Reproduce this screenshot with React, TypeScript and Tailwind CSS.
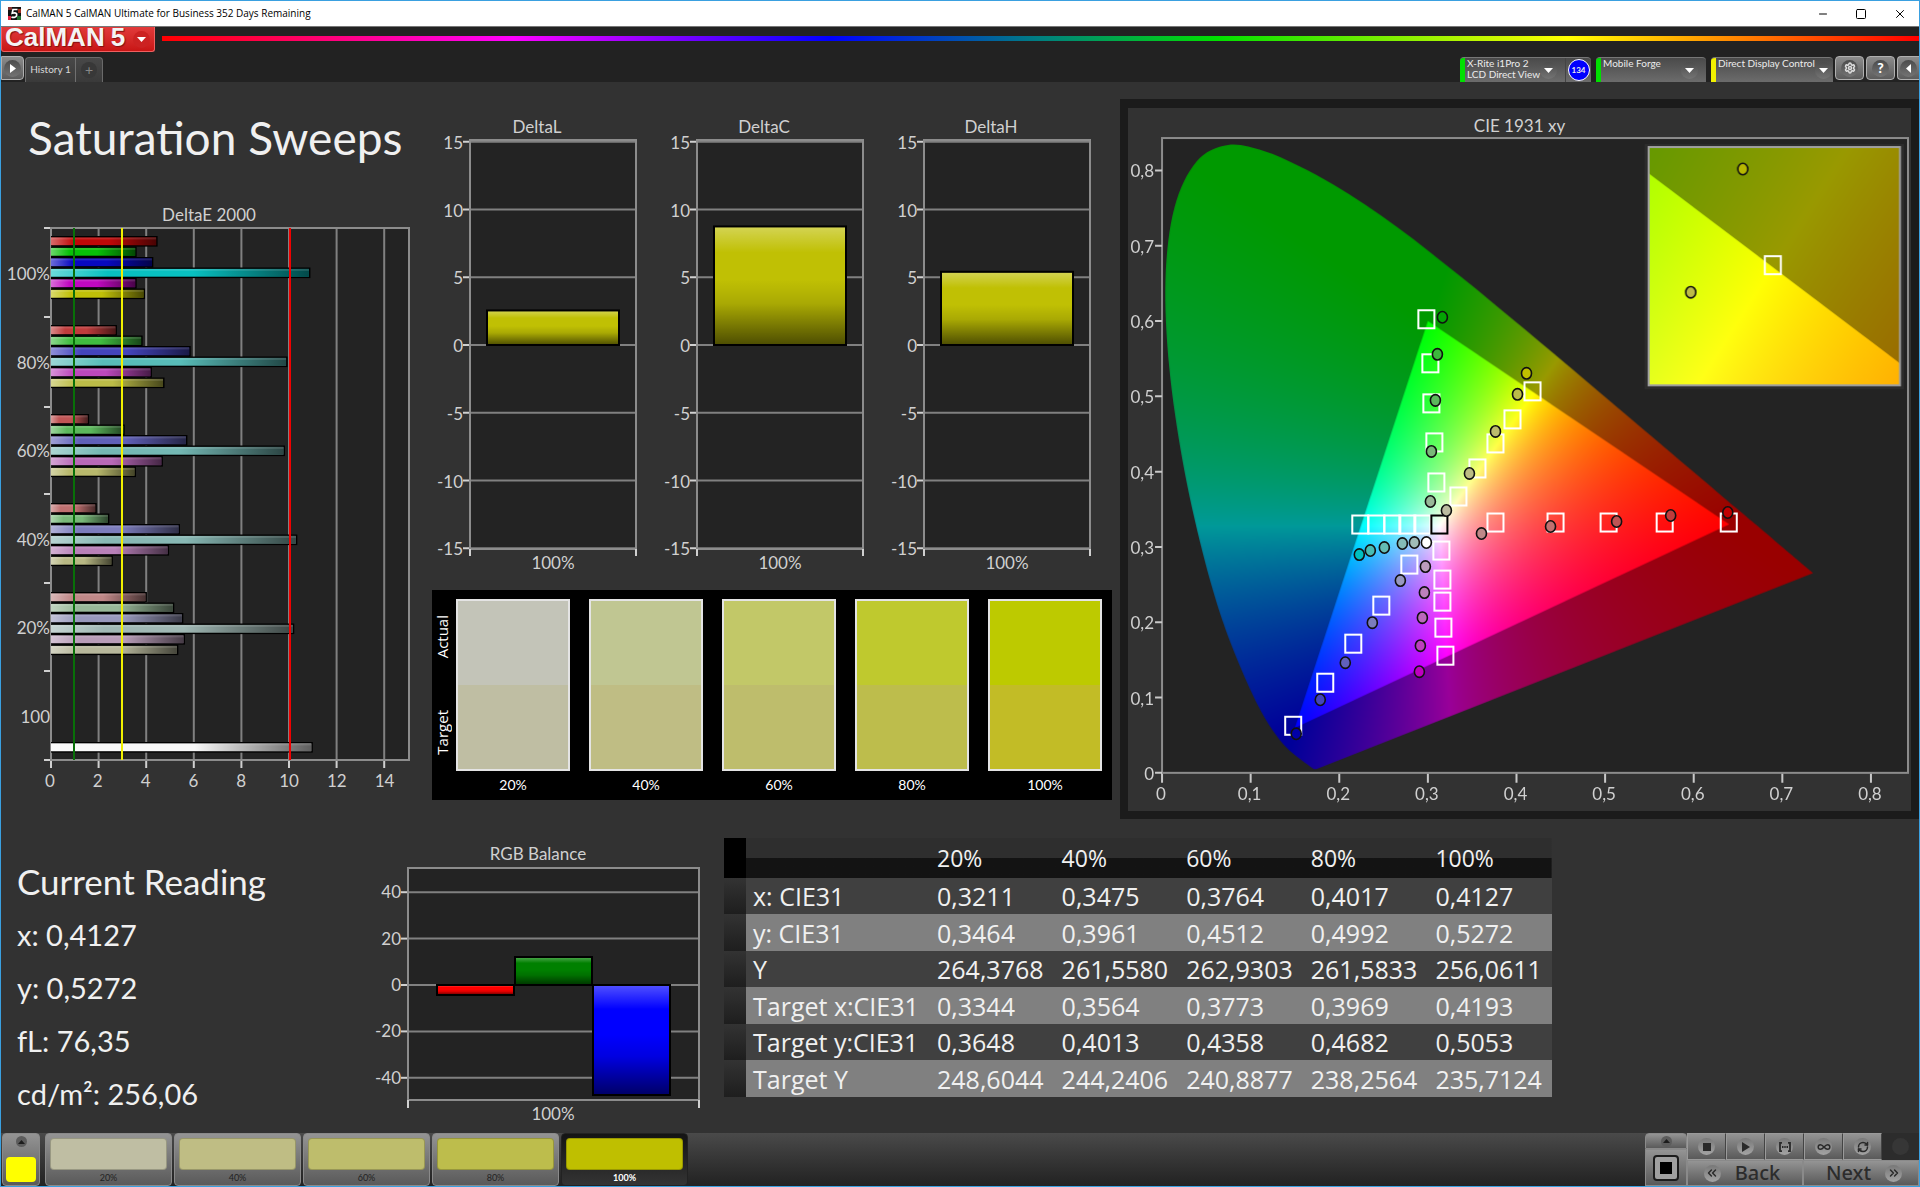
import { useEffect, useRef } from 'react';
import type { ReactNode } from 'react';
import { Settings, Minus, Square, X, ChevronsLeft, ChevronsRight, Infinity as InfinityIcon, RefreshCw } from 'lucide-react';

const LATO = 'Lato, "Open Sans", sans-serif';

/* ---------- CIE diagram helpers ---------- */

// Spectral locus, 2 degree observer
const LOCUS: [number, number][] = [
  [0.1741, 0.005], [0.1714, 0.0051], [0.1689, 0.0069], [0.1644, 0.0109], [0.1566, 0.0177],
  [0.144, 0.0297], [0.1355, 0.0399], [0.1241, 0.0578], [0.1096, 0.0868], [0.0913, 0.1327],
  [0.0687, 0.2007], [0.0454, 0.295], [0.0235, 0.4127], [0.0082, 0.5384], [0.0039, 0.6548],
  [0.0139, 0.7502], [0.0389, 0.812], [0.0743, 0.8338],
  [0.1142, 0.8262], [0.1547, 0.8059], [0.1929, 0.7816], [0.2296, 0.7543],
  [0.2658, 0.7243], [0.3016, 0.6923], [0.3373, 0.6589], [0.3731, 0.6245], [0.4087, 0.5896],
  [0.4441, 0.5547], [0.4788, 0.5202], [0.5125, 0.4866], [0.5448, 0.4544], [0.5752, 0.4242],
  [0.6029, 0.3965], [0.627, 0.3725], [0.6482, 0.3514], [0.6658, 0.334], [0.6915, 0.3083],
  [0.7079, 0.292], [0.719, 0.2809], [0.73, 0.27], [0.7347, 0.2653],
];

const GAMUT: [number, number][] = [[0.64, 0.33], [0.3, 0.6], [0.15, 0.06]];

type FieldProps = {
  width: number;
  height: number;
  x0: number;
  y0: number;
  sx: number;
  sy: number;
};

// x0 / y0 is the chromaticity of the lower left corner, sx / sy are pixels per unit
function ChromaField({ width, height, x0, y0, sx, sy }: FieldProps) {
  const ref = useRef<HTMLCanvasElement>(null);

  useEffect(() => {
    const ctx = ref.current?.getContext('2d');
    if (!ctx) return;
    const img = ctx.createImageData(width, height);
    for (let j = 0; j < height; j++) {
      const y = Math.max(0.001, y0 + (height - j) / sy);
      for (let i = 0; i < width; i++) {
        const x = x0 + i / sx;
        const X = x / y;
        const Z = (1 - x - y) / y;
        const r = Math.max(0, 3.2406 * X - 1.5372 - 0.4986 * Z);
        const g = Math.max(0, -0.9689 * X + 1.8758 + 0.0415 * Z);
        const b = Math.max(0, 0.0557 * X - 0.204 + 1.057 * Z);
        const m = Math.max(r, g, b) || 1;
        const k = (j * width + i) * 4;
        img.data[k] = (r / m) * 255;
        img.data[k + 1] = (g / m) * 255;
        img.data[k + 2] = (b / m) * 255;
        img.data[k + 3] = 255;
      }
    }
    ctx.putImageData(img, 0, 0);

    const toPx = ([x, y]: [number, number]) => [(x - x0) * sx, height - (y - y0) * sy];

    // darken everything outside the gamut
    ctx.beginPath();
    ctx.rect(0, 0, width, height);
    GAMUT.map(toPx).forEach(([px, py], n) => (n === 0 ? ctx.moveTo(px, py) : ctx.lineTo(px, py)));
    ctx.closePath();
    ctx.fillStyle = 'rgba(0,0,0,0.4)';
    ctx.fill('evenodd');

    // cut to the locus, smoothed between the samples
    const p = LOCUS.map(toPx);
    const at = (n: number) => p[Math.min(p.length - 1, Math.max(0, n))];
    ctx.globalCompositeOperation = 'destination-in';
    ctx.beginPath();
    ctx.moveTo(p[0][0], p[0][1]);
    for (let n = 0; n < p.length - 1; n++) {
      const [a, b, c, d] = [at(n - 1), at(n), at(n + 1), at(n + 2)];
      ctx.bezierCurveTo(
        b[0] + (c[0] - a[0]) / 6, b[1] + (c[1] - a[1]) / 6,
        c[0] - (d[0] - b[0]) / 6, c[1] - (d[1] - b[1]) / 6,
        c[0], c[1],
      );
    }
    ctx.closePath();
    ctx.fillStyle = '#000';
    ctx.fill();
    ctx.globalCompositeOperation = 'source-over';
  }, [width, height, x0, y0, sx, sy]);

  return <canvas ref={ref} width={width} height={height} className="block w-full h-full" />;
}

const targets: [number, number][] = [
  [1426, 319], [1430, 363], [1431, 403], [1434, 442], [1436, 482],
  [1532, 391], [1512, 419], [1495, 443], [1477, 468], [1458, 496],
  [1495, 522], [1555, 522], [1608, 522], [1664, 522], [1728, 522],
  [1360, 524], [1376, 524], [1392, 524], [1407, 524], [1422, 524],
  [1441, 550], [1442, 579], [1442, 601], [1443, 627], [1445, 655],
  [1409, 564], [1381, 605], [1353, 643], [1325, 682], [1293, 725],
];

const readings: [number, number, string][] = [
  [1442, 317, '#04a404'], [1437, 354, '#3cb83c'], [1435, 400, '#5cb85c'], [1431, 451, '#78b878'], [1430, 501, '#98b898'],
  [1526, 373, '#c0c000'], [1517, 394, '#bcbc48'], [1495, 431, '#bcbc6c'], [1469, 473, '#bcbc84'], [1446, 510, '#bcbca0'],
  [1727, 512, '#c00000'], [1670, 515, '#c03c3c'], [1616, 521, '#c05454'], [1550, 526, '#c07070'], [1481, 533, '#c08888'],
  [1359, 554, '#00c0c0'], [1370, 550, '#48bcb4'], [1384, 547, '#64bcb4'], [1402, 543, '#84bcb8'], [1414, 542, '#a0bcb8'],
  [1296, 733, '#0000a8'], [1320, 699, '#4444bc'], [1345, 662, '#6060bc'], [1372, 622, '#7c7cbc'], [1400, 580, '#9898c0'],
  [1425, 566, '#bc9cbc'], [1424, 592, '#bc80bc'], [1422, 617, '#bc68bc'], [1420, 645, '#bc40bc'], [1419, 671, '#c000c0'],
  [1426, 542, '#ffffff'],
];

function CieChart() {
  const steps = [0, 1, 2, 3, 4, 5, 6, 7, 8];
  return (
    <svg viewBox="1128 108 782 702" className="block w-full h-auto" fontFamily={LATO} fontSize={17} fill="#d0d0d0">
      <text x={1519} y={132} textAnchor="middle">CIE 1931 xy</text>
      <rect x={1162} y={138} width={745} height={634} fill="#232323" />
      <foreignObject x={1162} y={138} width={745} height={634}>
        <ChromaField width={745} height={634} x0={0} y0={0} sx={885} sy={752} />
      </foreignObject>
      <rect x={1162} y={138} width={745} height={634} fill="none" stroke="#8c8c8c" strokeWidth={2} />
      {steps.map((n) => (
        <g key={n}>
          <path d={`M1155 ${772 - n * 75.2}h7M${1162 + n * 88.5} 773v9`} stroke="#c8c8c8" strokeWidth={2} />
          <text x={1154} y={779 - n * 75.2} textAnchor="end">{n ? `0,${n}` : '0'}</text>
          <text x={1161 + n * 88.5} y={799} textAnchor="middle">{n ? `0,${n}` : '0'}</text>
        </g>
      ))}
      {targets.map(([x, y]) => (
        <rect key={`${x}-${y}`} x={x - 8} y={y - 9} width={16} height={18} fill="none" stroke="#fff" strokeWidth={2} />
      ))}
      <rect x={1431} y={515} width={16} height={18} fill="none" stroke="#000" strokeWidth={2} />
      {readings.map(([x, y, c]) => (
        <ellipse key={`${x}-${y}`} cx={x} cy={y} rx={5} ry={5.7} fill={c} stroke="#111" strokeWidth={1.6} />
      ))}

      {/* zoomed view round the current target */}
      <rect x={1644} y={144} width={259} height={245} fill="#2c2c2c" />
      <foreignObject x={1648} y={147} width={251} height={238}>
        <ChromaField width={251} height={238} x0={0.3925} y0={0.4782} sx={4600} sy={4380} />
      </foreignObject>
      <rect x={1648} y={147} width={251} height={238} fill="none" stroke="#a0a0a0" strokeWidth={2} />
      <rect x={1764} y={256} width={16} height={18} fill="none" stroke="#fff" strokeWidth={2} />
      <ellipse cx={1742} cy={169} rx={5} ry={5.7} fill="#b8b800" stroke="#111" strokeWidth={1.6} />
      <ellipse cx={1690} cy={292} rx={5} ry={5.7} fill="#bcbc48" stroke="#111" strokeWidth={1.6} />
    </svg>
  );
}

/* ---------- bar charts ---------- */

const sweeps = [
  { label: '100%', values: [4.48, 3.6, 4.3, 10.9, 3.6, 3.95], colors: ['#c00808', '#08c008', '#0808c0', '#08c0c0', '#c008c0', '#c0c008'] },
  { label: '80%', values: [2.77, 3.85, 5.87, 9.94, 4.24, 4.77], colors: ['#c03c3c', '#40bc40', '#4444bc', '#58bcb8', '#bc48bc', '#bcbc48'] },
  { label: '60%', values: [1.6, 3.1, 5.73, 9.83, 4.7, 3.57], colors: ['#c05555', '#5cb85c', '#6060b8', '#74b8b4', '#b868b8', '#b8b86c'] },
  { label: '40%', values: [1.92, 2.45, 5.42, 10.35, 4.96, 2.6], colors: ['#c07070', '#78b878', '#7c7cbc', '#88b8b4', '#b880b8', '#b8b884'] },
  { label: '20%', values: [4.03, 5.18, 5.56, 10.22, 5.63, 5.35], colors: ['#c08888', '#98b898', '#9898bc', '#a0b8b4', '#b89cb8', '#b8b89c'] },
];

function Sheen() {
  return (
    <defs>
      <linearGradient id="sheenX">
        <stop offset="0" stopColor="#fff" stopOpacity=".4" />
        <stop offset=".22" stopColor="#fff" stopOpacity="0" />
        <stop offset=".55" stopColor="#000" stopOpacity="0" />
        <stop offset="1" stopColor="#000" stopOpacity=".62" />
      </linearGradient>
      <linearGradient id="sheenY" x2="0" y2="1">
        <stop offset="0" stopColor="#fff" stopOpacity=".32" />
        <stop offset=".22" stopColor="#fff" stopOpacity="0" />
        <stop offset=".45" stopColor="#000" stopOpacity="0" />
        <stop offset=".65" stopColor="#000" stopOpacity=".12" />
        <stop offset="1" stopColor="#000" stopOpacity=".6" />
      </linearGradient>
    </defs>
  );
}

function HBar({ y, value, color }: { y: number; value: number; color: string }) {
  const w = value * 23.8;
  return (
    <g>
      <rect x={51} y={y} width={w} height={10.6} fill="#000" />
      <rect x={51} y={y + 1.4} width={w - 1.5} height={7.8} fill={color} />
      <rect x={51} y={y + 1.4} width={w - 1.5} height={7.8} fill="url(#sheenX)" />
      <rect x={51} y={y + 1.4} width={w - 1.5} height={2} fill="#fff" opacity={0.12} />
    </g>
  );
}

function DeltaEChart() {
  return (
    <svg viewBox="1 200 431 600" className="block w-full h-auto" fontFamily={LATO} fontSize={17} fill="#d0d0d0">
      <Sheen />
      <text x={209} y={221} textAnchor="middle">DeltaE 2000</text>
      <rect x={51} y={228} width={358} height={532} fill="#232323" />
      {[0, 2, 4, 6, 8, 10, 12, 14].map((n) => (
        <g key={n}>
          <path d={`M${51 + n * 23.8} 228v532`} stroke="#808080" strokeWidth={2} />
          <path d={`M${51 + n * 23.8} 760v8`} stroke="#d0d0d0" strokeWidth={2} />
          <text x={50 + n * 23.9} y={787} textAnchor="middle">{n}</text>
        </g>
      ))}
      {[228, 317, 407, 494, 583, 671, 760].map((y) => (
        <path key={y} d={`M44 ${y}h7`} stroke="#d0d0d0" strokeWidth={2} />
      ))}
      <rect x={51} y={228} width={358} height={532} fill="none" stroke="#8c8c8c" strokeWidth={2} />
      {sweeps.map((s, i) => (
        <g key={s.label}>
          <text x={50} y={280 + i * 88.5} textAnchor="end">{s.label}</text>
          {s.values.map((v, k) => (
            <HBar key={k} y={236 + i * 89 + k * 10.5} value={v} color={s.colors[k]} />
          ))}
        </g>
      ))}
      <text x={50} y={723} textAnchor="end">100</text>
      <HBar y={742} value={11} color="#f8f8f8" />
      <path d="M74 228v532" stroke="#087008" strokeWidth={2} />
      <path d="M122 228v532" stroke="#f0f000" strokeWidth={2} />
      <path d="M290 228v532" stroke="#f00000" strokeWidth={2} />
    </svg>
  );
}

function VBar({ x, y, w, h, color }: { x: number; y: number; w: number; h: number; color: string }) {
  return (
    <g>
      <rect x={x} y={y} width={w} height={h} fill={color} />
      <rect x={x} y={y} width={w} height={h} fill="url(#sheenY)" stroke="#000" strokeWidth={2} />
    </g>
  );
}

const deltas = [
  { title: 'DeltaL', value: 2.55 },
  { title: 'DeltaC', value: 8.75 },
  { title: 'DeltaH', value: 5.4 },
];

function DeltaCharts() {
  return (
    <svg viewBox="432 110 688 470" className="block w-full h-auto" fontFamily={LATO} fontSize={17} fill="#d0d0d0">
      {deltas.map((d, i) => (
        <g key={d.title} transform={`translate(${i * 227} 0)`}>
          <text x={537} y={133} textAnchor="middle">{d.title}</text>
          <rect x={470} y={140} width={166} height={409} fill="#232323" />
          {[15, 10, 5, 0, -5, -10, -15].map((n) => (
            <g key={n}>
              <path d={`M470 ${345 - n * 13.55}h166`} stroke="#808080" strokeWidth={2} />
              <path d={`M463 ${345 - n * 13.55}h7`} stroke="#d0d0d0" strokeWidth={2} />
              <text x={463} y={352 - n * 13.55} textAnchor="end">{n}</text>
            </g>
          ))}
          <rect x={470} y={140} width={166} height={409} fill="none" stroke="#8c8c8c" strokeWidth={2} />
          <path d="M470 549v7M636 549v7" stroke="#d0d0d0" strokeWidth={2} />
          <VBar x={487} y={345 - d.value * 13.55} w={132} h={d.value * 13.55} color="#c0c004" />
          <text x={553} y={569} textAnchor="middle">100%</text>
        </g>
      ))}
    </svg>
  );
}

function RgbBalance() {
  return (
    <svg viewBox="370 838 350 290" className="block w-full h-auto" fontFamily={LATO} fontSize={17} fill="#d0d0d0">
      <text x={538} y={860} textAnchor="middle">RGB Balance</text>
      <rect x={408} y={868} width={291} height={232} fill="#232323" />
      {[40, 20, 0, -20, -40].map((n) => (
        <g key={n}>
          <path d={`M408 ${985 - n * 2.32}h291`} stroke="#808080" strokeWidth={2} />
          <path d={`M401 ${985 - n * 2.32}h7`} stroke="#d0d0d0" strokeWidth={2} />
          <text x={401} y={991 - n * 2.32} textAnchor="end">{n}</text>
        </g>
      ))}
      <rect x={408} y={868} width={291} height={232} fill="none" stroke="#8c8c8c" strokeWidth={2} />
      <path d="M408 1100v8M699 1100v8" stroke="#d0d0d0" strokeWidth={2} />
      <VBar x={437} y={985} w={77} h={10} color="#ff0000" />
      <VBar x={515} y={957} w={77} h={28} color="#008000" />
      <VBar x={593} y={985} w={77} h={110} color="#0000ff" />
      <text x={553} y={1120} textAnchor="middle">100%</text>
    </svg>
  );
}

/* ---------- swatches and table ---------- */

const swatches = [
  { label: '20%', actual: '#c3c4b8', target: '#bfbea3' },
  { label: '40%', actual: '#c0c692', target: '#bfbd84' },
  { label: '60%', actual: '#c2c868', target: '#bebd6c' },
  { label: '80%', actual: '#bfc92e', target: '#bdbd4c' },
  { label: '100%', actual: '#bdca00', target: '#c2bc26' },
];

function SwatchPanel() {
  return (
    <div className="flex h-[210px] mr-2 bg-black text-white pt-[9px] pr-2.5 font-['Open_Sans',sans-serif]">
      <div className="w-6 shrink-0 h-[172px] py-4 flex flex-col justify-between items-start text-[15px] leading-5 font-medium">
        <span className="[writing-mode:vertical-rl] rotate-180">Actual</span>
        <span className="[writing-mode:vertical-rl] rotate-180">Target</span>
      </div>
      <div className="flex-1 grid grid-cols-5 gap-[19px]">
        {swatches.map((s) => (
          <div key={s.label} className="text-center">
            <div className="h-[172px] border-2 border-[#e4e4e4] flex flex-col">
              <div className="flex-1" style={{ background: s.actual }} />
              <div className="flex-1" style={{ background: s.target }} />
            </div>
            <div className="font-[Lato,sans-serif] text-sm leading-7">{s.label}</div>
          </div>
        ))}
      </div>
    </div>
  );
}

const rows = [
  ['x: CIE31', '0,3211', '0,3475', '0,3764', '0,4017', '0,4127'],
  ['y: CIE31', '0,3464', '0,3961', '0,4512', '0,4992', '0,5272'],
  ['Y', '264,3768', '261,5580', '262,9303', '261,5833', '256,0611'],
  ['Target x:CIE31', '0,3344', '0,3564', '0,3773', '0,3969', '0,4193'],
  ['Target y:CIE31', '0,3648', '0,4013', '0,4358', '0,4682', '0,5053'],
  ['Target Y', '248,6044', '244,2406', '240,8877', '238,2564', '235,7124'],
];

function DataTable() {
  return (
    <table className="w-[828px] h-[259px] table-fixed border-collapse text-left text-[25px] leading-8 text-[#f0f0f0] font-['Open_Sans',sans-serif]">
      <colgroup>
        <col className="w-[22px]" />
        <col className="w-[183px]" />
        <col span={5} />
      </colgroup>
      <thead>
        <tr className="h-10 bg-linear-to-b from-[#2e2e2e] from-50% to-[#131313] to-50% text-[23px]">
          <td className="bg-black" />
          <td />
          {swatches.map((s) => (
            <th key={s.label} scope="col" className="font-normal pl-2 py-0">{s.label}</th>
          ))}
        </tr>
      </thead>
      <tbody>
        {rows.map(([name, ...cells]) => (
          <tr key={name} className="bg-[#404040] even:bg-[#808080]">
            <td className="bg-linear-to-b from-[#333333] to-[#1e1e1e]" />
            <th scope="row" className="font-normal pl-[7px] py-0 whitespace-nowrap">{name}</th>
            {cells.map((c, i) => (
              <td key={i} className="pl-2 py-0">{c}</td>
            ))}
          </tr>
        ))}
      </tbody>
    </table>
  );
}

/* ---------- window chrome ---------- */

function Knob({ children }: { children?: ReactNode }) {
  return (
    <span className="size-[17px] shrink-0 rounded-full bg-linear-to-b from-[#4c4c4c] to-[#747474] flex items-center justify-center text-white">
      {children}
    </span>
  );
}

function Down() {
  return <svg width="9" height="5" viewBox="0 0 9 5"><path d="M0 0h9L4.5 5z" fill="#fff" /></svg>;
}

function TitleBar() {
  return (
    <div className="flex items-center h-[26px] bg-white text-black border-b border-[#777] pl-[7px] pr-3">
      <svg width="13" height="13" viewBox="0 0 13 13" className="mr-[5px]">
        <rect width="13" height="13" fill="#111" />
        <path d="M0 0h4v3H0z" fill="#803030" />
        <path d="M0 9h3v4H0z" fill="#e02040" />
        <path d="M9 9h4v4H9z" fill="#207030" />
        <path d="M10 2h3v4h-3z" fill="#a03020" />
        <path d="M9.500 2.500H5L4.200 6.300c3-.8 4.800-.2 4.500 1.800C8.400 10.300 5.600 11 3.500 10" fill="none" stroke="#fff" strokeWidth="1.700" />
      </svg>
      <span className="text-[10px] font-['Open_Sans',sans-serif]">CalMAN 5 CalMAN Ultimate for Business 352 Days Remaining</span>
      <div className="ml-auto flex items-center gap-[26px]">
        <button aria-label="Minimize"><Minus className="size-3" strokeWidth={2} /></button>
        <button aria-label="Maximize"><Square className="size-3" strokeWidth={2} /></button>
        <button aria-label="Close"><X className="size-[14px]" strokeWidth={1.7} /></button>
      </div>
    </div>
  );
}

function Source({ color, className, lines, children }: { color: string; className: string; lines: string[]; children?: ReactNode }) {
  return (
    <div className={`flex h-[25px] rounded-t-sm overflow-hidden bg-linear-to-b from-[#4a4a4a] to-[#6c6c6c] border-t border-[#777] ${className}`}>
      <span className="w-[5px] shrink-0" style={{ background: color }} />
      <button className="flex-1 flex items-center justify-between pl-0.5 pr-2 text-left">
        <span className="self-start text-[10px] leading-[11px] whitespace-nowrap">
          {lines.map((l) => <span key={l} className="block">{l}</span>)}
        </span>
        <Knob><Down /></Knob>
      </button>
      {children}
    </div>
  );
}

const keyCls = 'h-6 rounded border border-[#b0b0b0] bg-linear-to-b from-[#8c8c8c] to-[#5c5c5c] flex items-center justify-center';

function Header() {
  return (
    <header className="bg-[#222222] text-[#ececec] font-[Lato,sans-serif]">
      <div className="flex items-start gap-[7px] h-[29px]">
        <button aria-label="CalMAN 5 menu" className="flex items-center w-[154px] h-[25px] shrink-0 pl-[3px] bg-linear-to-b from-[#e23a3a] to-[#c81414] border border-t-0 border-[#f06060] rounded-b-[3px]">
          <span className="text-[26px] leading-6 pb-1 font-bold font-['Liberation_Sans',sans-serif] text-[#f4f4f4] [text-shadow:1px_1px_1px_#801010] flex gap-1.5">
            <span>CalMAN</span>
            <span>5</span>
          </span>
          <span className="ml-2 size-[17px] rounded-full bg-[#cc2222] flex items-center justify-center"><Down /></span>
        </button>
        <div className="flex-1 h-[5px] mt-[9px] bg-[linear-gradient(90deg,#ff0000,#ff00ff_20%,#0000ff_38%,#008080_50%,#00e000_60%,#ffff00_80%,#ff8000_90%,#ff0000)]" />
      </div>
      <div className="flex items-end h-[26px] text-[10px]">
        <button aria-label="Open panel" className={`${keyCls} w-[23px] mb-0.5 rounded-l-none`}>
          <Knob><svg width="6" height="9" viewBox="0 0 6 9"><path d="M0 0l6 4.500L0 9z" fill="#fff" /></svg></Knob>
        </button>
        <div className="ml-px flex h-[25px] rounded-t border border-b-0 border-[#6a6a6a] bg-linear-to-b from-[#484848] to-[#3a3a3a]">
          <button className="w-[50px] pb-0.5 text-[#d8d8d8] border-r border-[#707070] text-center">History 1</button>
          <button aria-label="Add history" className="w-[26px] flex items-center justify-center">
            <span className="size-4 rounded-full bg-[#383838] text-[#888] text-sm leading-4">+</span>
          </button>
        </div>
        <div className="ml-auto flex items-end">
          <Source color="#00e000" className="w-[131px] mr-[5px]" lines={['X-Rite i1Pro 2', 'LCD Direct View']}>
            <span className="w-7 border-l border-[#444] flex items-center justify-center">
              <span className="size-[22px] shrink-0 rounded-full bg-[#0000ff] border border-white text-[8px] font-bold flex items-center justify-center">134</span>
            </span>
          </Source>
          <Source color="#00e000" className="w-[110px] mr-[5px]" lines={['Mobile Forge']} />
          <Source color="#f0f000" className="w-[122px] mr-0.5" lines={['Direct Display Control']} />
          <div className="flex gap-0.5 mb-0.5">
            <button aria-label="Settings" className={`${keyCls} w-[29px]`}><Knob><Settings className="size-3 text-[#ddd]" strokeWidth={3} /></Knob></button>
            <button aria-label="Help" className={`${keyCls} w-[29px]`}><Knob><span className="text-sm leading-4 font-black">?</span></Knob></button>
            <button aria-label="Collapse" className={`${keyCls} w-[22px] rounded-r-none border-r-0`}>
              <Knob><svg width="5" height="9" viewBox="0 0 5 9"><path d="M5 0v9L0 4.500z" fill="#fff" /></svg></Knob>
            </button>
          </div>
        </div>
      </div>
    </header>
  );
}

const footBtn = 'border border-[#8a8a8a] bg-linear-to-b from-[#949494] to-[#5a5a5a]';

function Disc({ children }: { children?: ReactNode }) {
  return (
    <span className="size-[17px] shrink-0 rounded-full bg-linear-to-b from-[#787878] to-[#a4a4a4] flex items-center justify-center text-[#2a2a2a]">
      {children}
    </span>
  );
}

function UpDisc() {
  return (
    <span className="size-[11px] shrink-0 rounded-full bg-[#5c5c5c] flex items-center justify-center">
      <svg width="7" height="4" viewBox="0 0 7 4"><path d="M0 4h7L3.500 0z" fill="#1c1c1c" /></svg>
    </span>
  );
}

function Footer() {
  const tool = `${footBtn} flex-1 flex items-center justify-center border-y-[#9a9a9a] border-l-[#9a9a9a] border-r-[#444]`;
  return (
    <footer className="mt-auto flex h-[53px] bg-linear-to-b from-[#4a4a4a] to-[#222222] font-[Lato,sans-serif]">
      <button aria-label="Current pattern" className={`${footBtn} w-[38px] ml-px mr-[5px] rounded flex flex-col items-center pt-0.5`}>
        <UpDisc />
        <span className="mt-2.5 w-[30px] h-[25px] shrink-0 rounded-sm bg-[#ffff00]" />
      </button>
      <div className="flex gap-0.5">
        {swatches.map((s) => {
          const on = s.label === '100%';
          return (
            <button
              key={s.label}
              className={`w-[127px] rounded flex flex-col px-1 pt-1 text-[9px] leading-4 ${on ? 'bg-linear-to-b from-[#141414] to-[#343434] border border-[#222] text-white font-bold' : `${footBtn} text-[#222]`}`}
            >
              <span
                className="w-full h-8 shrink-0 rounded border border-black/20"
                style={{ background: on ? '#bfbf00' : s.target }}
              />
              <span className="w-full text-center">{s.label}</span>
            </button>
          );
        })}
      </div>
      <div className="ml-auto flex">
        <div className="w-[42px] flex flex-col">
          <button aria-label="Expand" className={`${footBtn} h-4 rounded-t flex items-center justify-center`}><UpDisc /></button>
          <button aria-label="Pattern window" className={`${footBtn} flex-1 flex items-center justify-center`}>
            <span className="size-[26px] rounded border-2 border-[#1c1c1c] bg-[#a0a0a0] flex items-center justify-center">
              <span className="size-3 bg-black" />
            </span>
          </button>
        </div>
        <div className="w-[232px] flex flex-col">
          <div className="flex h-[27px]">
            <button aria-label="Stop" className={tool}><Disc><span className="size-2 bg-[#2a2a2a]" /></Disc></button>
            <button aria-label="Play" className={tool}>
              <Disc><svg width="9" height="10" viewBox="0 0 9 10"><path d="M1 0l8 5-8 5z" fill="currentColor" /></svg></Disc>
            </button>
            <button aria-label="Read series" className={tool}>
              <Disc>
                <svg width="12" height="10" viewBox="0 0 12 10" fill="none" stroke="currentColor" strokeWidth="1.800">
                  <path d="M3 .9H1v8.200h2M9 .9h2v8.200H9M3 5h1.500M5.300 5h1.400M7.500 5H9" />
                </svg>
              </Disc>
            </button>
            <button aria-label="Continuous" className={tool}><Disc><InfinityIcon className="size-3.5" strokeWidth={2.5} /></Disc></button>
            <button aria-label="Refresh" className={tool}><Disc><RefreshCw className="size-3" strokeWidth={3} /></Disc></button>
            <span className="flex-1 flex items-center justify-center bg-[#2c2c2c]"><span className="size-[17px] rounded-full bg-[#363636]" /></span>
          </div>
          <div className="flex-1 flex text-xl leading-6 text-[#2c2c2c] font-['Noto_Sans',sans-serif] font-medium">
            <button className={`${footBtn} flex-1 flex items-center justify-center gap-3.5 pr-1.5`}>
              <Disc><ChevronsLeft className="size-3.5" strokeWidth={2.5} /></Disc>
              Back
            </button>
            <button className={`${footBtn} flex-1 flex items-center justify-center gap-3.5 pl-1.5`}>
              Next
              <Disc><ChevronsRight className="size-3.5" strokeWidth={2.5} /></Disc>
            </button>
          </div>
        </div>
      </div>
    </footer>
  );
}

export default function App() {
  return (
    <div className="min-h-screen flex flex-col border border-[#3aa0e0] bg-[#323232] text-[#f0f0f0] font-[Lato,sans-serif]">
      <TitleBar />
      <Header />
      <main>
        <section className="grid grid-cols-[minmax(0,431fr)_minmax(0,688fr)_minmax(0,799fr)] items-start">
          <div>
            <h1 className="h-[118px] pt-[26px] pl-[27px] text-[46px] leading-[60px] whitespace-nowrap">Saturation Sweeps</h1>
            <DeltaEChart />
          </div>
          <div className="pt-7">
            <DeltaCharts />
            <div className="mt-2.5">
              <SwatchPanel />
            </div>
          </div>
          <div className="mt-[17px] bg-[#1b1b1b] p-2 pt-[9px]">
            <div className="bg-[#323232]">
              <CieChart />
            </div>
          </div>
        </section>
        <section className="grid grid-cols-[minmax(0,369fr)_minmax(0,350fr)_minmax(0,1199fr)] items-start pt-[19px]">
          <div className="pt-4 pl-4 text-[29px] leading-[53px]">
            <h2 className="text-[35px] leading-[54px]">Current Reading</h2>
            <p>x: 0,4127</p>
            <p>y: 0,5272</p>
            <p>fL: 76,35</p>
            <p>cd/m²: 256,06</p>
          </div>
          <RgbBalance />
          <div className="pl-1">
            <DataTable />
          </div>
        </section>
      </main>
      <Footer />
    </div>
  );
}
